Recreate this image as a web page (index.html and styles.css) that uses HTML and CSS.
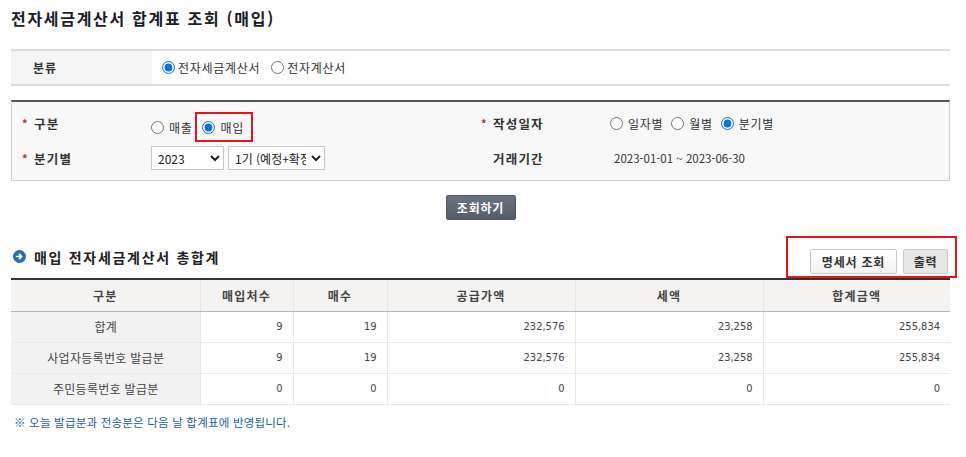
FILE: index.html
```html
<!DOCTYPE html>
<html lang="ko">
<head>
<meta charset="utf-8">
<title>전자세금계산서 합계표 조회 (매입)</title>
<link rel="stylesheet" href="styles.css">
</head>
<body>
<div class="page">
  <h1 class="title">전자세금계산서 합계표 조회 (매입)</h1>

  <div class="class-table">
    <div class="class-label">분류</div>
    <div class="class-value">
      <label class="radio"><input type="radio" name="kind" checked> 전자세금계산서</label>
      <label class="radio"><input type="radio" name="kind"> 전자계산서</label>
    </div>
  </div>

  <div class="search-box">
    <div class="search-col left">
      <div class="search-row first">
        <div class="s-label"><span class="star">*</span>구분</div>
        <div class="s-value radios">
          <label class="radio"><input type="radio" name="gb"> 매출</label>
          <span class="hl-radio"><label class="radio"><input type="radio" name="gb" checked> 매입</label></span>
        </div>
      </div>
      <div class="search-row">
        <div class="s-label"><span class="star">*</span>분기별</div>
        <div class="s-value selects">
          <select class="sel year"><option>2023</option></select>
          <select class="sel quarter"><option>1기 (예정+확정)</option></select>
        </div>
      </div>
    </div>
    <div class="search-col right">
      <div class="search-row">
        <div class="s-label"><span class="star">*</span>작성일자</div>
        <div class="s-value radios wide">
          <label class="radio"><input type="radio" name="dt"> 일자별</label>
          <label class="radio"><input type="radio" name="dt"> 월별</label>
          <label class="radio"><input type="radio" name="dt" checked> 분기별</label>
        </div>
      </div>
      <div class="search-row">
        <div class="s-label"><span class="star blank">*</span>거래기간</div>
        <div class="s-value period">2023-01-01 ~ 2023-06-30</div>
      </div>
    </div>
  </div>

  <div class="btn-area">
    <button class="btn-search">조회하기</button>
  </div>

  <div class="section-head">
    <h2 class="sec-title">
      <svg class="sec-icon" width="13" height="13" viewBox="0 0 13 13"><circle cx="6.5" cy="6.5" r="6.5" fill="#2c6cad"/><path d="M3.5 6.5h5M6.5 4.3l2.3 2.2-2.3 2.2" stroke="#fff" stroke-width="1.6" fill="none" stroke-linecap="round" stroke-linejoin="round"/></svg>
      매입 전자세금계산서 총합계
    </h2>
    <div class="hl-buttons">
      <button class="btn-white">명세서 조회</button>
      <button class="btn-gray">출력</button>
    </div>
  </div>

  <table class="sum-table">
    <colgroup>
      <col class="c1"><col class="c2"><col class="c3"><col class="c4"><col class="c5"><col>
    </colgroup>
    <thead>
      <tr><th>구분</th><th>매입처수</th><th>매수</th><th>공급가액</th><th>세액</th><th>합계금액</th></tr>
    </thead>
    <tbody>
      <tr><td class="name">합계</td><td>9</td><td>19</td><td>232,576</td><td>23,258</td><td>255,834</td></tr>
      <tr><td class="name">사업자등록번호 발급분</td><td>9</td><td>19</td><td>232,576</td><td>23,258</td><td>255,834</td></tr>
      <tr><td class="name">주민등록번호 발급분</td><td>0</td><td>0</td><td>0</td><td>0</td><td>0</td></tr>
    </tbody>
  </table>

  <p class="note">※ 오늘 발급분과 전송분은 다음 날 합계표에 반영됩니다.</p>
</div>
</body>
</html>
```

FILE: styles.css
```css
* { box-sizing: border-box; }
body {
  margin: 0;
  background: #fff;
  font-family: "Noto Sans CJK KR", "Noto Sans", sans-serif;
  font-size: 12px;
  color: #333;
}
.page {
  width: 939px;
  margin-left: 11px;
}
.title {
  margin: 0;
  padding-top: 7px;
  height: 49px;
  font-size: 16px;
  font-weight: bold;
  line-height: 22px;
  color: #1c1c2a;
  letter-spacing: 1.7px;
}
.class-table {
  display: flex;
  height: 37px;
  border-top: 2px solid #ddd;
  border-bottom: 2px solid #ddd;
}
.class-label {
  width: 141px;
  background: #f5f5f5;
  font-weight: bold;
  padding-left: 22px;
  display: flex;
  align-items: center;
  color: #333;
  letter-spacing: 1px;
}
.class-value {
  display: flex;
  align-items: center;
  padding-left: 10px;
  gap: 11px;
}
.radio {
  display: inline-flex;
  align-items: center;
  color: #333;
  white-space: nowrap;
  letter-spacing: 0.7px;
}
.radio input {
  margin: 0 3px 0 0;
  width: 13px;
  height: 13px;
  accent-color: #0a73ea;
}
.search-box {
  margin-top: 14px;
  height: 81px;
  background: #f8f8f8;
  border: 1px solid #cfcfcf;
  border-top: 2px solid #555;
  display: flex;
}
.search-col {
  display: flex;
  flex-direction: column;
  padding-top: 9px;
  gap: 11px;
}
.search-col.left { width: 459px; }
.search-row {
  display: flex;
  align-items: center;
  height: 24px;
}
.s-label {
  font-weight: bold;
  font-size: 12.5px;
  color: #333;
  display: flex;
  align-items: center;
  width: 139px;
  padding-left: 10px;
  letter-spacing: 1.2px;
}
.star {
  color: #c0282d;
  width: 12px;
  font-size: 11px;
  letter-spacing: 0;
}
.star.blank { visibility: hidden; }
.s-value {
  display: flex;
  align-items: center;
}
.radios .radio input { margin-right: 5px; }
.first .s-value { margin-top: 8px; }
.radios { gap: 3px; }
.radios.wide { gap: 8px; }
.period { padding-left: 4px; font-size: 11.5px; color: #333; }
.hl-radio {
  display: inline-flex;
  align-items: center;
  border: 2px solid #e8141c;
  height: 30px;
  width: 58px;
  padding-left: 5px;
}
.selects { gap: 4px; }
.sel {
  height: 24px;
  border: 1px solid #c8c8c8;
  background: #fff;
  font-family: "Noto Sans CJK KR", sans-serif;
  font-size: 12px;
  color: #222;
  padding: 0 2px;
}
.sel.year { width: 73px; }
.sel.quarter { width: 97px; }
.btn-area {
  display: flex;
  justify-content: center;
  padding-top: 14px;
  height: 54px;
}
.btn-search {
  width: 70px;
  height: 25px;
  border: 1px solid #4f5662;
  border-radius: 2px;
  background: linear-gradient(#6b7280, #555c68);
  color: #fff;
  font-family: inherit;
  font-weight: bold;
  font-size: 12px;
  letter-spacing: 0.8px;
  padding: 0;
}
.section-head {
  display: flex;
  justify-content: space-between;
  align-items: center;
  height: 43px;
  margin-right: -7px;
}
.sec-title {
  margin: 0;
  font-size: 14px;
  font-weight: bold;
  color: #222;
  display: flex;
  align-items: center;
  gap: 8px;
  padding-left: 2px;
  letter-spacing: 1.7px;
}
.sec-icon { flex: none; }
.hl-buttons {
  display: flex;
  align-items: center;
  gap: 6px;
  border: 2px solid #e8141c;
  height: 42px;
  width: 171px;
  padding: 10px 7px 0 22px;
}
.btn-white, .btn-gray {
  height: 25px;
  border: 1px solid #c9c9c9;
  border-radius: 2px;
  font-family: inherit;
  font-weight: bold;
  font-size: 12px;
  color: #333;
  padding: 0;
  letter-spacing: 0.8px;
}
.btn-white { width: 87px; background: linear-gradient(#fff, #f2f2f2); }
.btn-gray { width: 45px; background: #e7e7e7; }
.sum-table {
  width: 939px;
  border-collapse: collapse;
  table-layout: fixed;
  border-top: 2px solid #333;
}
.c1 { width: 189px; }
.c2 { width: 93px; }
.c3 { width: 94px; }
.c4 { width: 188px; }
.c5 { width: 188px; }
.sum-table th {
  height: 32px;
  background: #f4f3f1;
  font-weight: bold;
  color: #444;
  border-bottom: 1px solid #b5b5b5;
  border-left: 1px solid #e6e6e6;
  font-size: 12px;
  letter-spacing: 1.2px;
}
.sum-table th:first-child, .sum-table td:first-child { border-left: none; }
.sum-table td {
  height: 31px;
  text-align: right;
  padding-right: 10px;
  border-bottom: 1px solid #e9e9e9;
  border-left: 1px solid #e9e9e9;
  color: #444;
  font-family: "DejaVu Sans Condensed", "Liberation Sans", sans-serif;
  font-size: 11px;
}
.sum-table td.name {
  text-align: center;
  padding-right: 0;
  background: #f2f2f2;
  font-family: "Noto Sans CJK KR", sans-serif;
  font-size: 12px;
  color: #444;
  letter-spacing: 0.3px;
}
.note {
  margin: 9px 0 0 3px;
  color: #1d5fa0;
  font-size: 11.5px;
  letter-spacing: 0.2px;
}
```
